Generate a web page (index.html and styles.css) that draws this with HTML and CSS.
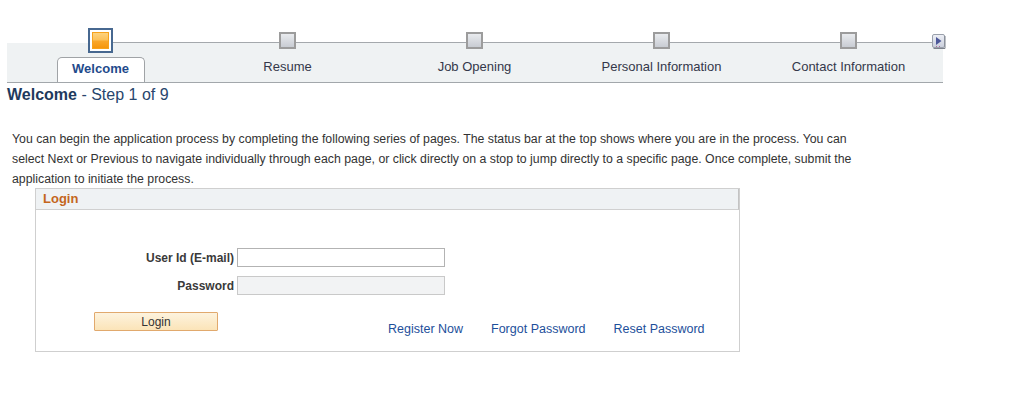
FILE: index.html
```html
<!DOCTYPE html>
<html>
<head>
<meta charset="utf-8">
<link rel="stylesheet" href="styles.css">
</head>
<body>
<div class="train">
  <div class="step step-first">
    <div class="marker"><span class="box box-current"><span class="box-fill"></span></span></div>
    <div class="tab">Welcome</div>
  </div>
  <div class="step">
    <div class="marker"><span class="box"></span></div>
    <div class="label">Resume</div>
  </div>
  <div class="step">
    <div class="marker"><span class="box"></span></div>
    <div class="label">Job Opening</div>
  </div>
  <div class="step">
    <div class="marker"><span class="box"></span></div>
    <div class="label">Personal Information</div>
  </div>
  <div class="step">
    <div class="marker"><span class="box"></span></div>
    <div class="label">Contact Information</div>
  </div>
  <span class="next-btn">
    <svg width="14" height="16" viewBox="0 0 14 16">
      <defs>
        <linearGradient id="nb" x1="0" y1="0" x2="0" y2="1">
          <stop offset="0" stop-color="#eef0f6"/>
          <stop offset="1" stop-color="#c9cedb"/>
        </linearGradient>
      </defs>
      <rect x="0.5" y="0.5" width="12" height="13" rx="1.5" fill="url(#nb)" stroke="#9aa0ab"/>
      <path d="M13 2 V14.5 H1.5" fill="none" stroke="#7d828c" stroke-width="1"/>
      <path d="M4 3 L9.5 7 L4 11 Z" fill="#4c5799"/>
      <rect x="4" y="12" width="1" height="1" fill="#b06a9a"/>
      <rect x="7" y="12" width="1" height="1" fill="#b06a9a"/>
    </svg>
  </span>
</div>

<h1 class="page-title"><span class="title-strong">Welcome</span> - Step 1 of 9</h1>

<p class="intro">You can begin the application process by completing the following series of pages. The status bar at the top shows where you are in the process. You can<br>select Next or Previous to navigate individually through each page, or click directly on a stop to jump directly to a specific page. Once complete, submit the<br>application to initiate the process.</p>

<div class="login-box">
  <div class="login-head">Login</div>
  <div class="login-body">
    <div class="form-grid">
      <label class="field-label">User Id (E-mail)</label>
      <span class="input"></span>
      <label class="field-label">Password</label>
      <span class="input input-disabled"></span>
    </div>
    <div class="actions">
      <span class="btn">Login</span>
      <div class="links">
        <a class="link">Register Now</a>
        <a class="link">Forgot Password</a>
        <a class="link">Reset Password</a>
      </div>
    </div>
  </div>
</div>
</body>
</html>
```

FILE: styles.css
```css
* { box-sizing: border-box; }

body {
  margin: 0;
  font-family: "Liberation Sans", Arial, sans-serif;
  color: #333;
  background: #fff;
}

.train {
  position: relative;
  display: grid;
  grid-template-columns: repeat(5, 187px);
  width: 936px;
  margin: 28px 0 0 7px;
  background: linear-gradient(#fff 0, #fff 15px, #eff2f3 15px);
  border-bottom: 1px solid #a2a7ab;
}

.step {
  position: relative;
  display: flex;
  flex-direction: column;
  align-items: center;
}

.step::before {
  content: "";
  position: absolute;
  top: 14px;
  left: 0;
  right: 0;
  height: 1px;
  background: #a4a8ac;
}

.step-first::before { left: 50%; }

.marker {
  position: relative;
  z-index: 1;
  height: 25px;
  display: flex;
  align-items: center;
  justify-content: center;
}

.box {
  display: block;
  width: 17px;
  height: 17px;
  border: 2px solid #9c9c9c;
  background: linear-gradient(#e9ebee, #c8ccd3);
}

.box-current {
  width: 25px;
  height: 25px;
  border: 2px solid #476890;
  background: #fff;
  padding: 2px;
}

.box-fill {
  display: block;
  width: 17px;
  height: 17px;
  border: 1px solid #f7a21c;
  background: linear-gradient(#fdd27e 0, #fcc15a 45%, #f9a72a 55%, #f6960c 100%);
}

.label {
  margin-top: 6px;
  font-size: 13px;
  line-height: 16px;
  color: #34384a;
  white-space: nowrap;
}

.tab {
  margin-top: 4px;
  width: 88px;
  height: 25px;
  padding-top: 1px;
  padding-bottom: 3px;
  border: 1px solid #a0a3a6;
  border-bottom: none;
  border-radius: 5px 5px 0 0;
  background: #fff;
  text-align: center;
  font-size: 13px;
  font-weight: bold;
  line-height: 20px;
  color: #1f4b8c;
}

.next-btn {
  position: absolute;
  left: 925px;
  top: 6px;
  width: 14px;
  height: 16px;
  z-index: 2;
}

.next-btn svg { display: block; }

.page-title {
  margin: 2px 0 0 7px;
  font-size: 16px;
  line-height: 20px;
  font-weight: normal;
  color: #28466d;
}

.title-strong {
  font-weight: bold;
  color: #1e3a5d;
}

.intro {
  margin: 24px 0 0 12px;
  font-size: 12.3px;
  line-height: 20px;
  color: #333;
}

.login-box {
  width: 705px;
  margin: -1px 0 0 35px;
  border: 1px solid #cfcfcf;
}

.login-head {
  height: 21px;
  padding: 0 7px;
  background: #eff2f4;
  border-bottom: 1px solid #d0d0d0;
  border-right: 1px solid #c3c3c3;
  font-size: 13px;
  font-weight: bold;
  line-height: 19px;
  color: #c4661d;
}

.login-body {
  padding: 38px 0 15px 0;
}

.form-grid {
  display: grid;
  grid-template-columns: 198px 208px;
  column-gap: 3px;
  row-gap: 9px;
  align-items: center;
}

.field-label {
  text-align: right;
  font-size: 12px;
  font-weight: bold;
  color: #3a3a3a;
}

.input {
  display: block;
  height: 19px;
  border: 1px solid #b3b3b3;
  background: #fff;
}

.input-disabled {
  border-color: #c9c9c9;
  background: #f2f3f4;
}

.actions {
  display: flex;
  align-items: flex-start;
  margin-top: 17px;
  padding-left: 58px;
}

.btn {
  display: block;
  width: 124px;
  height: 19px;
  border: 1px solid #e1a96d;
  border-radius: 1px;
  background: linear-gradient(#fdf3de, #fbe4b8);
  text-align: center;
  font-size: 12px;
  line-height: 18px;
  color: #333;
}

.links {
  display: flex;
  gap: 28px;
  margin-left: 170px;
  padding-top: 10px;
}

.link {
  font-size: 12.5px;
  line-height: 14px;
  color: #1d4f9b;
  text-decoration: none;
  white-space: nowrap;
}
```
